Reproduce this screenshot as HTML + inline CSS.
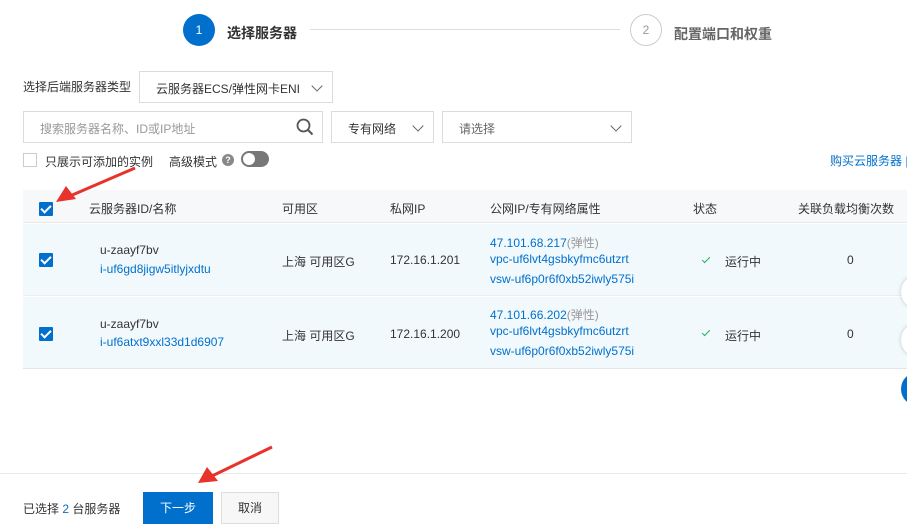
<!DOCTYPE html>
<html><head><meta charset="utf-8"><style>
*{margin:0;padding:0;box-sizing:border-box}
body{width:907px;height:532px;overflow:hidden;background:#fff;font-family:"Liberation Sans","Noto Sans CJK SC",sans-serif;font-size:12px;color:#333;position:relative}
.a{position:absolute;white-space:nowrap}
.box{position:absolute;border:1px solid #dcdcdc;background:#fff}
.chev{position:absolute;width:8px;height:8px;border-right:1.5px solid #666;border-bottom:1.5px solid #666;transform:rotate(45deg)}
.cb{position:absolute;width:14px;height:14px;background:#0070cc;border-radius:1px}
.cb:after{content:"";position:absolute;left:4px;top:1px;width:4px;height:8px;border-right:2px solid #fff;border-bottom:2px solid #fff;transform:rotate(45deg)}
.blue{color:#0070cc}
.ok{position:absolute;width:4px;height:8px;border-right:1.5px solid #1db35e;border-bottom:1.5px solid #1db35e;transform:rotate(45deg)}
</style></head><body>
<div class="a" style="left:183px;top:14px;width:32px;height:32px;border-radius:50%;background:#0070cc;color:#fff;text-align:center;line-height:32px;font-size:12px">1</div>
<div class="a" style="left:227px;top:23px;font-size:14px;font-weight:bold;color:#333">选择服务器</div>
<div class="a" style="left:310px;top:29px;width:310px;height:1px;background:#ddd"></div>
<div class="a" style="left:630px;top:14px;width:32px;height:32px;border-radius:50%;border:1px solid #ccc;color:#999;text-align:center;line-height:30px">2</div>
<div class="a" style="left:674px;top:24px;font-size:14px;font-weight:bold;color:#666">配置端口和权重</div>

<div class="a" style="left:23px;top:78px">选择后端服务器类型</div>
<div class="box" style="left:139px;top:71px;width:194px;height:32px"></div>
<div class="a" style="left:156px;top:80px">云服务器ECS/弹性网卡ENI</div>
<div class="chev" style="left:313px;top:82px"></div>

<div class="box" style="left:23px;top:111px;width:300px;height:32px"></div>
<div class="a" style="left:40px;top:120px;color:#999">搜索服务器名称、ID或IP地址</div>
<svg class="a" style="left:296px;top:118px" width="18" height="18"><circle cx="7.5" cy="7.5" r="6" fill="none" stroke="#555" stroke-width="1.8"/><line x1="12" y1="12" x2="16.5" y2="16.5" stroke="#555" stroke-width="2"/></svg>
<div class="box" style="left:331px;top:111px;width:103px;height:32px"></div>
<div class="a" style="left:348px;top:120px">专有网络</div>
<div class="chev" style="left:414px;top:122px"></div>
<div class="box" style="left:442px;top:111px;width:190px;height:32px"></div>
<div class="a" style="left:459px;top:120px;color:#666">请选择</div>
<div class="chev" style="left:612px;top:122px"></div>

<div class="box" style="left:23px;top:153px;width:14px;height:14px;border-color:#ccc"></div>
<div class="a" style="left:45px;top:153px">只展示可添加的实例</div>
<div class="a" style="left:169px;top:153px">高级模式</div>
<div class="a" style="left:222px;top:154px;width:12px;height:12px;border-radius:50%;background:#888;color:#fff;font-size:9px;text-align:center;line-height:12px;font-weight:bold">?</div>
<div class="a" style="left:241px;top:151px;width:28px;height:16px;border-radius:8px;background:#777"></div>
<div class="a" style="left:243px;top:153px;width:12px;height:12px;border-radius:50%;background:#fff"></div>
<div class="a blue" style="left:830px;top:152px">购买云服务器 |</div>

<div class="a" style="left:23px;top:190px;width:884px;height:33px;background:#f7f8fa;border-bottom:1px solid #e8e8e8"></div>
<div class="cb" style="left:39px;top:202px"></div>
<div class="a" style="left:89px;top:200px">云服务器ID/名称</div>
<div class="a" style="left:282px;top:200px">可用区</div>
<div class="a" style="left:390px;top:200px">私网IP</div>
<div class="a" style="left:490px;top:200px">公网IP/专有网络属性</div>
<div class="a" style="left:693px;top:200px">状态</div>
<div class="a" style="left:798px;top:200px">关联负载均衡次数</div>

<div class="a" style="left:23px;top:224px;width:884px;height:72px;background:#f2f9fd;border-bottom:1px solid #e8eef2"></div>
<div class="a" style="left:23px;top:297px;width:884px;height:72px;background:#f2f9fd;border-bottom:1px solid #e0e6ea"></div>

<div class="cb" style="left:39px;top:253px"></div>
<div class="a" style="left:100px;top:243px">u-zaayf7bv</div>
<div class="a blue" style="left:100px;top:262px">i-uf6gd8jigw5itlyjxdtu</div>
<div class="a" style="left:282px;top:253px">上海 可用区G</div>
<div class="a" style="left:390px;top:253px">172.16.1.201</div>
<div class="a blue" style="left:490px;top:234px">47.101.68.217<span style="color:#999">(弹性)</span></div>
<div class="a blue" style="left:490px;top:252px">vpc-uf6lvt4gsbkyfmc6utzrt</div>
<div class="a blue" style="left:490px;top:272px">vsw-uf6p0r6f0xb52iwly575i</div>
<div class="ok" style="left:704px;top:255px"></div>
<div class="a" style="left:725px;top:253px">运行中</div>
<div class="a" style="left:847px;top:253px">0</div>

<div class="cb" style="left:39px;top:327px"></div>
<div class="a" style="left:100px;top:317px">u-zaayf7bv</div>
<div class="a blue" style="left:100px;top:335px">i-uf6atxt9xxl33d1d6907</div>
<div class="a" style="left:282px;top:327px">上海 可用区G</div>
<div class="a" style="left:390px;top:327px">172.16.1.200</div>
<div class="a blue" style="left:490px;top:306px">47.101.66.202<span style="color:#999">(弹性)</span></div>
<div class="a blue" style="left:490px;top:324px">vpc-uf6lvt4gsbkyfmc6utzrt</div>
<div class="a blue" style="left:490px;top:344px">vsw-uf6p0r6f0xb52iwly575i</div>
<div class="ok" style="left:704px;top:328px"></div>
<div class="a" style="left:725px;top:327px">运行中</div>
<div class="a" style="left:847px;top:327px">0</div>

<div class="a" style="left:901px;top:275px;width:34px;height:34px;border-radius:50%;background:#fff;box-shadow:0 0 4px rgba(0,0,0,.2)"></div>
<div class="a" style="left:901px;top:323px;width:34px;height:34px;border-radius:50%;background:#fff;box-shadow:0 0 4px rgba(0,0,0,.2)"></div>
<div class="a" style="left:901px;top:372px;width:34px;height:34px;border-radius:50%;background:#0070cc"></div>

<div class="a" style="left:0;top:473px;width:907px;height:1px;background:#e8e8e8"></div>
<div class="a" style="left:23px;top:500px">已选择 <span class="blue">2</span> 台服务器</div>
<div class="a" style="left:143px;top:492px;width:70px;height:32px;background:#0070cc;color:#fff;text-align:center;line-height:32px">下一步</div>
<div class="a" style="left:221px;top:492px;width:58px;height:32px;border:1px solid #ddd;background:#f7f7f7;text-align:center;line-height:30px">取消</div>

<svg class="a" style="left:0;top:0" width="907" height="532">
<line x1="135" y1="168" x2="70" y2="196" stroke="#e8322c" stroke-width="3"/>
<polygon points="56,202 66,186 76,199" fill="#e8322c"/>
<line x1="272" y1="447" x2="212" y2="476" stroke="#e8322c" stroke-width="3"/>
<polygon points="198,483 207,467 218,481" fill="#e8322c"/>
</svg>
</body></html>
